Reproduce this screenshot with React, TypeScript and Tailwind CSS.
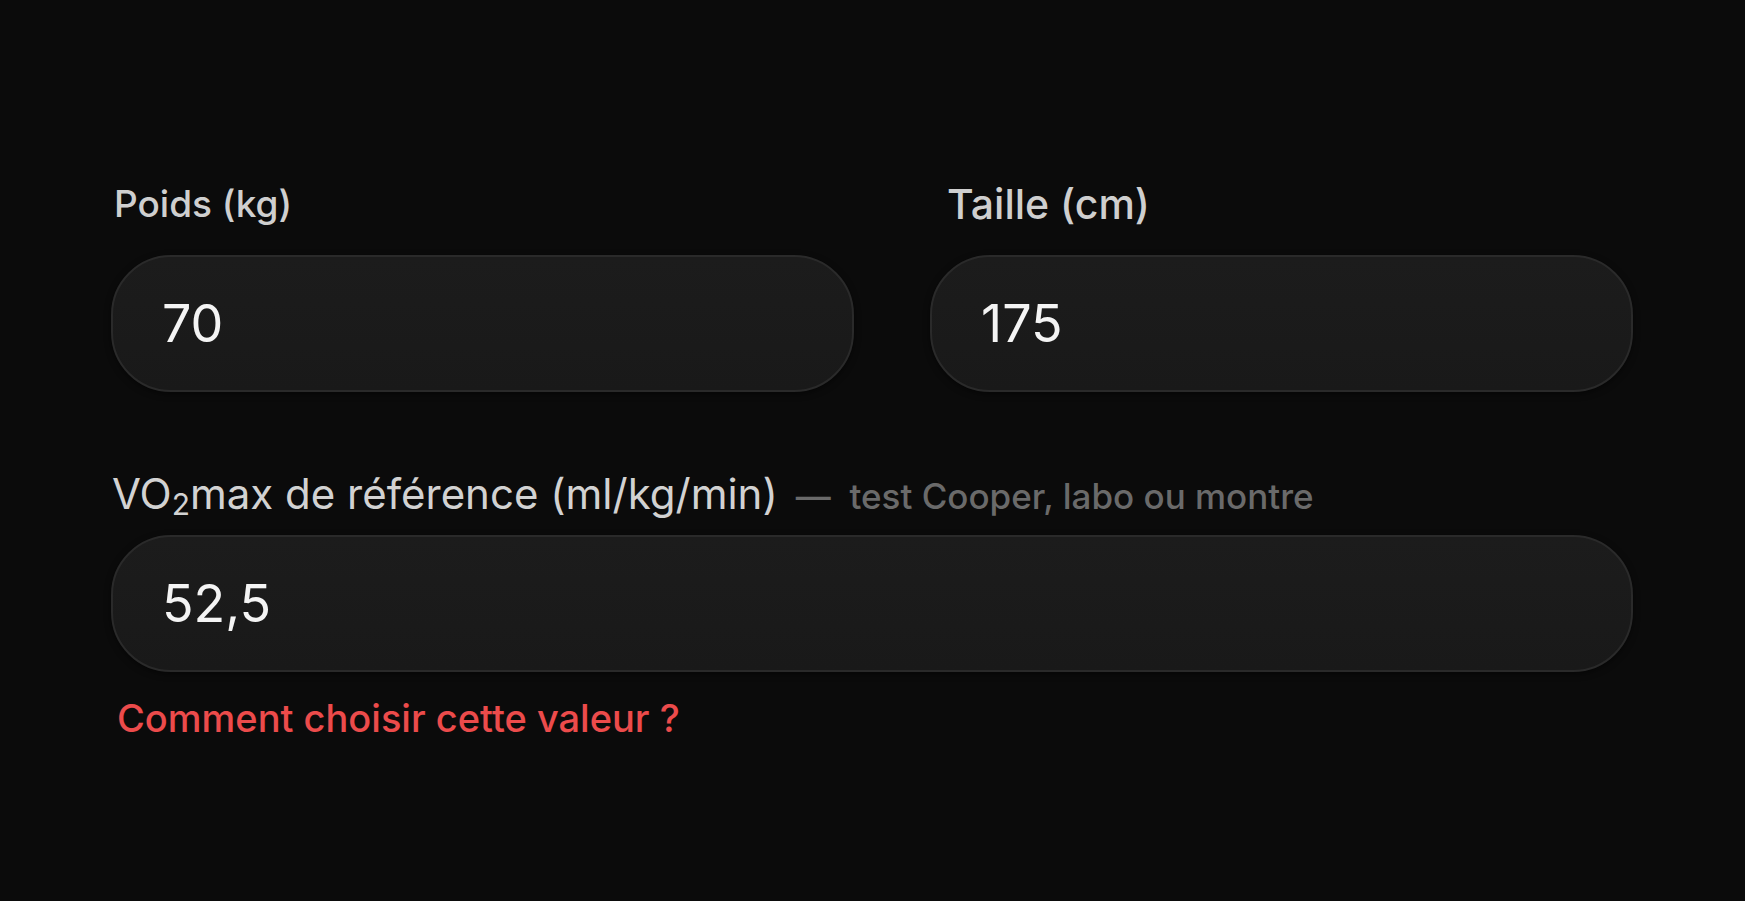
const font = { fontFamily: "Inter, 'Noto Sans', sans-serif" };

function Field({
  value,
  className = "",
}: {
  value: string;
  className?: string;
}) {
  return (
    <div
      className={`flex h-[137px] items-center rounded-[60px] border-2 border-[#2a2a2a] bg-gradient-to-b from-[#1c1c1c] to-[#191919] pl-[49px] shadow-[0_2px_6px_rgba(0,0,0,0.5)] ${className}`}
    >
      <span className="text-[52px] font-normal leading-none text-[#f4f4f4]">
        {value}
      </span>
    </div>
  );
}

export default function App() {
  return (
    <div
      className="min-h-screen w-full bg-[#0b0b0b] pl-[111px] pt-[182px]"
      style={font}
    >
      <div className="w-[1522px]">
        <div className="flex gap-[76px]">
          <div className="w-[743px]">
            <label className="block pl-[3px] text-[37px] font-medium leading-[44px] text-[#cfcfcf]">
              Poids (kg)
            </label>
            <Field value="70" className="mt-[29px]" />
          </div>
          <div className="w-[703px]">
            <label className="block pl-[17px] text-[41px] font-medium leading-[44px] text-[#cfcfcf]">
              Taille (cm)
            </label>
            <Field value="175" className="mt-[29px]" />
          </div>
        </div>

        <div className="mt-[80px] flex items-baseline pl-[1px] leading-[44px]">
          <span className="text-[42px] font-normal text-[#d2d2d2]">
            VO<sub className="relative top-[6px] text-[30px] align-baseline">2</sub>
            max de référence (ml/kg/min)
          </span>
          <span className="ml-[18px] text-[35px] font-medium text-[#6a6a6a]">
            —&nbsp; test Cooper, labo ou montre
          </span>
        </div>
        <Field value="52,5" className="mt-[17px]" />

        <button className="mt-[24px] block pl-[6px] text-[38px] font-medium leading-[44px] text-[#ec4b4b]">
          Comment choisir cette valeur ?
        </button>
      </div>
    </div>
  );
}
